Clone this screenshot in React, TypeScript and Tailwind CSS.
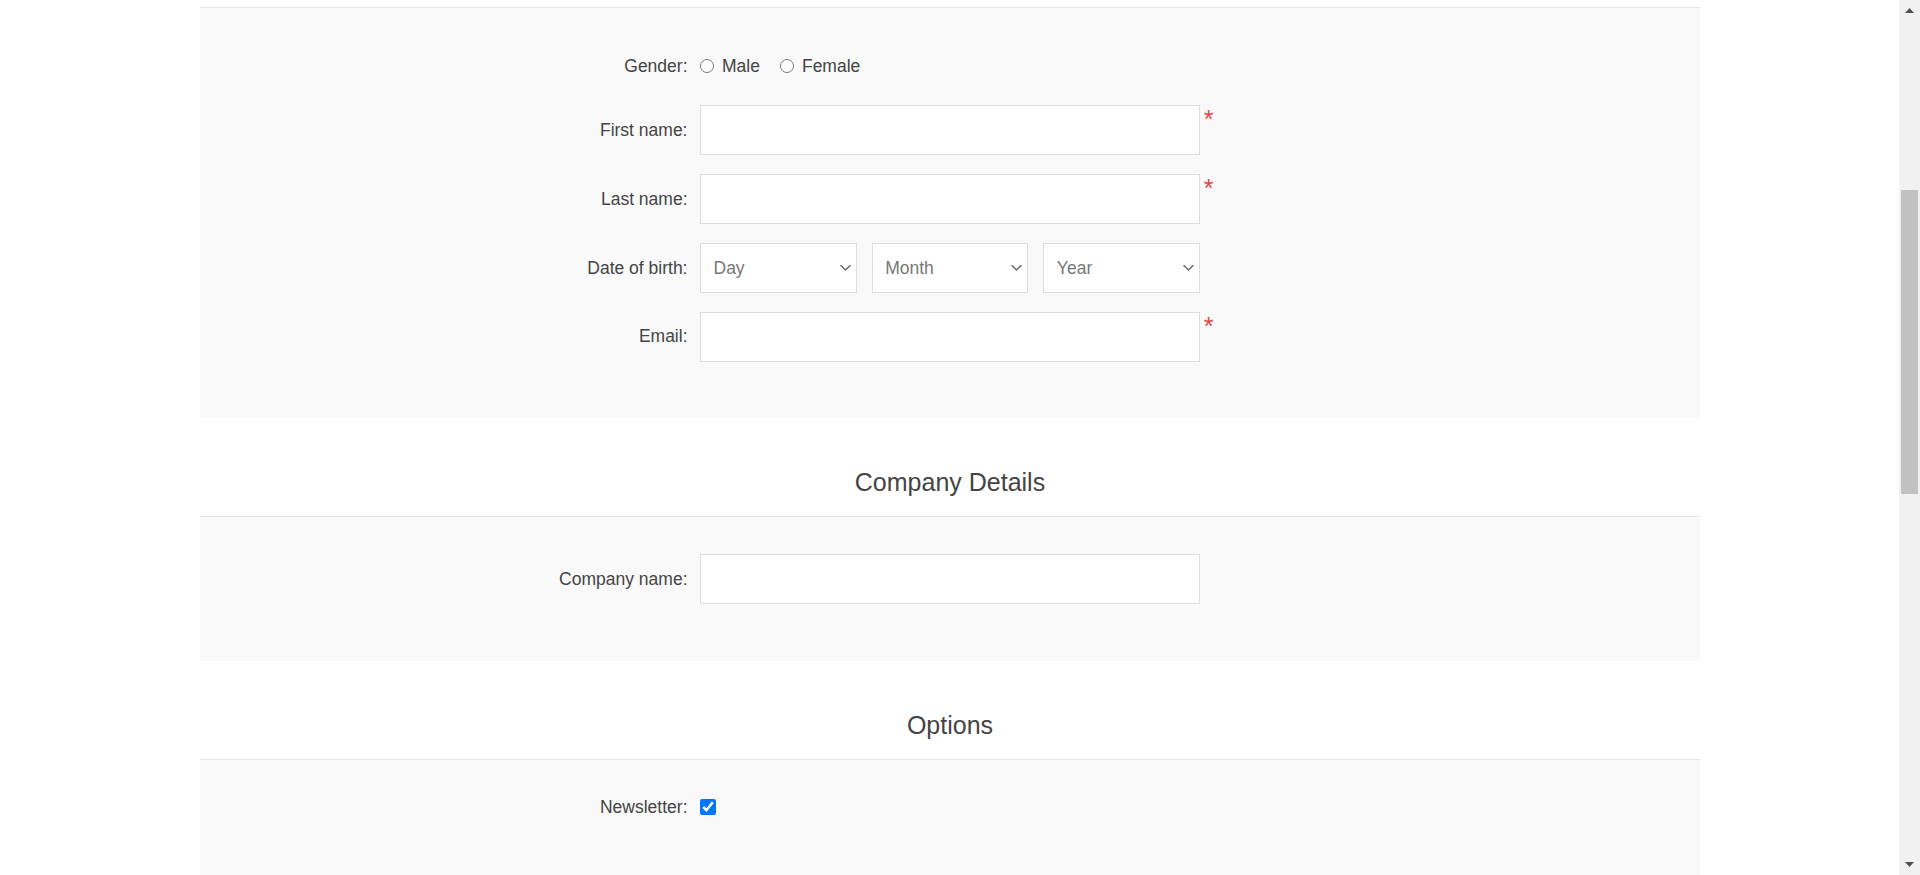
import type { ReactNode } from "react";

function Chevron() {
  return (
    <svg
      className="pointer-events-none absolute right-[6px] top-1/2 -translate-y-1/2"
      width="11"
      height="7"
      viewBox="0 0 11 7"
      fill="none"
    >
      <polyline points="1,1 5.5,5.5 10,1" stroke="#6f6f6f" strokeWidth="1.6" strokeLinecap="round" strokeLinejoin="round" />
    </svg>
  );
}

function Required() {
  return <span className="self-start ml-[3.75px] text-[25px] leading-[28.75px] text-[#e4434b]">*</span>;
}

function Row({ label, children, required, rowClass }: { label: string; children: ReactNode; required?: boolean; rowClass?: string }) {
  return (
    <div className={"flex items-center mb-[18.75px] " + (rowClass ?? "")}>
      <label className="w-[468.75px] mr-[12.5px] shrink-0 text-right text-[17.5px] text-[#444]">{label}</label>
      {children}
      {required ? <Required /> : null}
    </div>
  );
}

function TextInput({ type = "text" }: { type?: string }) {
  return (
    <input
      type={type}
      className="w-[500px] h-[50px] border border-[#ddd] bg-white px-[12.5px] text-[17.5px] text-[#777] outline-none"
    />
  );
}

function DateSelect({ placeholder }: { placeholder: string }) {
  return (
    <div className="relative flex-1">
      <select className="w-full h-[50px] appearance-none border border-[#ddd] bg-white pl-[12.5px] pr-[24px] text-[17.5px] text-[#777] outline-none">
        <option>{placeholder}</option>
      </select>
      <Chevron />
    </div>
  );
}

function Title({ children }: { children: ReactNode }) {
  return (
    <div className="mt-[50px] mb-[19px] px-[12.5px] text-center text-[25px] leading-[29px] text-[#444]">
      {children}
    </div>
  );
}

function FormFields({ children, extraBottom }: { children: ReactNode; extraBottom?: boolean }) {
  return (
    <div
      className={
        "border-t border-[#e6e6e6] bg-[#f9f9f9] px-[18.75px] pt-[37.5px] " + (extraBottom ? "pb-[60px]" : "pb-[37.5px]")
      }
    >
      {children}
    </div>
  );
}

function ScrollBar() {
  return (
    <div aria-hidden className="fixed right-0 top-0 flex h-screen w-[21px] flex-col bg-[#f1f1f1]">
      <div className="flex h-[21px] items-center justify-center">
        <svg width="9" height="5" viewBox="0 0 9 5">
          <polygon points="0,5 4.5,0 9,5" fill="#505050" />
        </svg>
      </div>
      <div className="flex-1 px-[2px]">
        <div className="mt-[169px] h-[304px] bg-[#c1c1c1]" />
      </div>
      <div className="flex h-[21px] items-center justify-center">
        <svg width="9" height="5" viewBox="0 0 9 5">
          <polygon points="0,0 9,0 4.5,5" fill="#505050" />
        </svg>
      </div>
    </div>
  );
}

export default function App() {
  return (
    <div className="relative h-screen overflow-hidden bg-white font-['Liberation_Sans',Arial,sans-serif] text-[#444]">
      <div className="ml-[200px] w-[1500px] pt-[7px]">
        <FormFields>
          <Row label="Gender:" rowClass="h-[41px]">
            <div className="flex items-center text-[17.5px] text-[#444]">
              <input type="radio" name="gender" className="m-0 h-[14px] w-[14px]" />
              <span className="ml-[8px]">Male</span>
              <input type="radio" name="gender" className="m-0 ml-[20px] h-[14px] w-[14px]" />
              <span className="ml-[8px]">Female</span>
            </div>
          </Row>
          <Row label="First name:" required>
            <TextInput />
          </Row>
          <Row label="Last name:" required>
            <TextInput />
          </Row>
          <Row label="Date of birth:">
            <div className="flex w-[500px] gap-[15px]">
              <DateSelect placeholder="Day" />
              <DateSelect placeholder="Month" />
              <DateSelect placeholder="Year" />
            </div>
          </Row>
          <Row label="Email:" required>
            <TextInput type="email" />
          </Row>
        </FormFields>

        <Title>Company Details</Title>
        <FormFields>
          <Row label="Company name:">
            <TextInput />
          </Row>
        </FormFields>

        <Title>Options</Title>
        <FormFields extraBottom>
          <Row label="Newsletter:" rowClass="h-[20px]">
            <input type="checkbox" defaultChecked className="m-0 h-[16px] w-[16px]" />
          </Row>
        </FormFields>
      </div>
      <ScrollBar />
    </div>
  );
}
